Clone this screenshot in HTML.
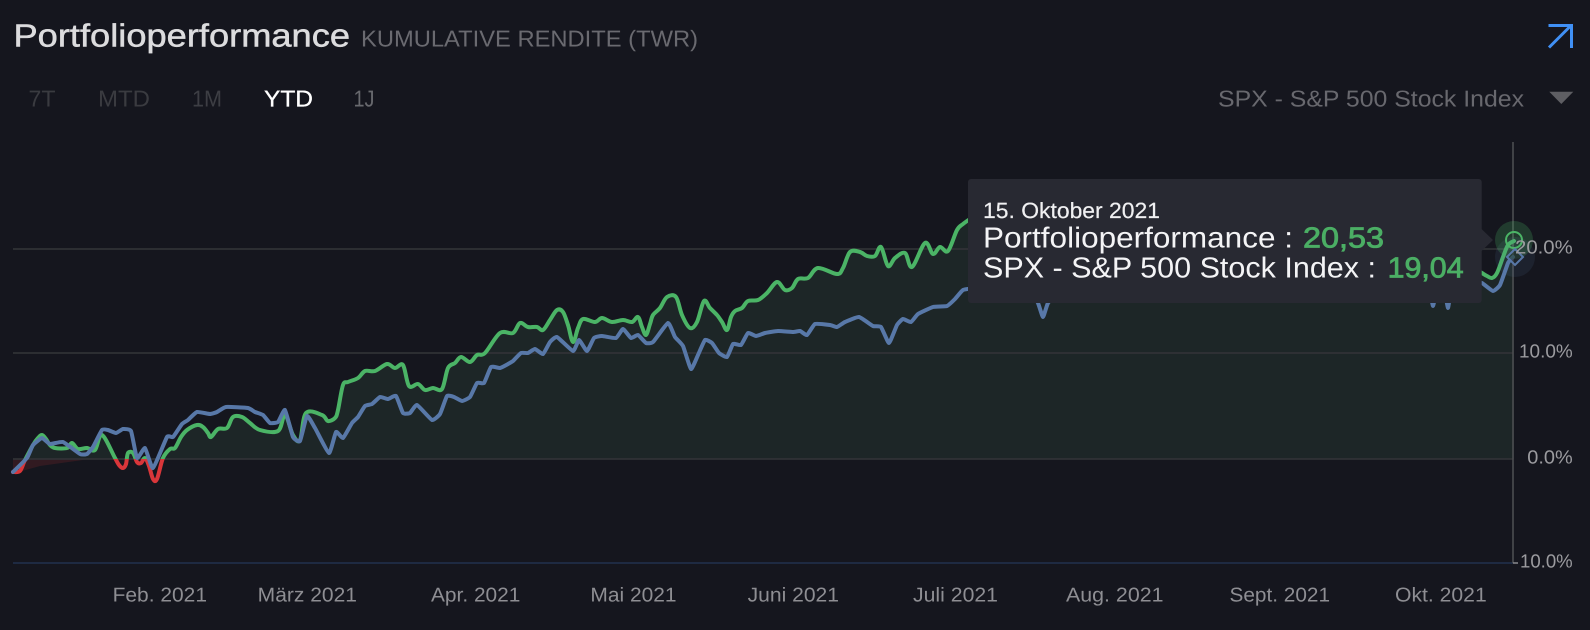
<!DOCTYPE html>
<html>
<head>
<meta charset="utf-8">
<style>
html,body{margin:0;padding:0;background:#15161e;width:1590px;height:630px;overflow:hidden}
svg{display:block}
text{font-family:"Liberation Sans",sans-serif;text-rendering:geometricPrecision}
</style>
</head>
<body>
<svg width="1590" height="630" viewBox="0 0 1590 630" xmlns="http://www.w3.org/2000/svg">
<defs>
<clipPath id="up"><rect x="0" y="0" width="1590" height="459"/></clipPath>
<clipPath id="down"><rect x="0" y="459" width="1590" height="171"/></clipPath>
</defs>
<rect width="1590" height="630" fill="#15161e"/>

<!-- header -->
<text x="13.5" y="46.7" font-size="32" fill="#dcdcde" stroke="#dcdcde" stroke-width="0.5" textLength="336.5" lengthAdjust="spacingAndGlyphs">Portfolioperformance</text>
<text x="361" y="46.7" font-size="23" fill="#6a6a70" textLength="337" lengthAdjust="spacingAndGlyphs">KUMULATIVE RENDITE (TWR)</text>
<path d="M1549 47.5L1570.5 26M1548.5 25.5H1571.5V48" fill="none" stroke="#4090f5" stroke-width="3"/>

<!-- tabs -->
<text x="28.5" y="106.7" font-size="23" fill="#3a3b40" textLength="27" lengthAdjust="spacingAndGlyphs">7T</text>
<text x="98" y="106.7" font-size="23" fill="#3a3b40" textLength="52" lengthAdjust="spacingAndGlyphs">MTD</text>
<text x="192" y="106.7" font-size="23" fill="#3d3e44" textLength="30" lengthAdjust="spacingAndGlyphs">1M</text>
<text x="264" y="106.7" font-size="23" fill="#ffffff" stroke="#ffffff" stroke-width="0.3" textLength="49" lengthAdjust="spacingAndGlyphs">YTD</text>
<text x="353.5" y="106.7" font-size="23" fill="#68696e" textLength="21" lengthAdjust="spacingAndGlyphs">1J</text>
<text x="1218" y="106.7" font-size="23" fill="#68686e" textLength="306" lengthAdjust="spacingAndGlyphs">SPX - S&amp;P 500 Stock Index</text>
<path d="M1549.3 91.7H1573.3L1561.3 104Z" fill="#5e5e63"/>

<!-- area -->
<polygon clip-path="url(#up)" fill="#1d2627" points="13,459 13,472 20,471 25,460 33,445 38,438 42,435 46,439 50,445 55,448 67,448 72,443 78,449 87,448 95,450 102,435 115,458 119,465 123,468 126,464 128,453 133,453 137,462 141,463 145,458 149,466 153,479 157,479 163,458 170,449 175,448 181,437 187,430 197,425 203,427 208,433 211,437 218,429 227,428 233,417 242,417 250,423 260,430 278,431 285,415 293,435 300,440 306,413 322,415 328,421 335,418 338,410 343,385 348,382 358,378 365,371 375,371 387,364 395,368 403,365 409,386 418,384 425,390 433,388 442,389 448,368 455,363 461,357 470,362 477,355 485,353 500,333 513,333 520,323 528,327 537,327 543,330 550,320 557,310 563,312 568,325 573,342 578,328 583,319 595,322 602,318 612,322 623,320 632,322 638,317 642,327 646,335 650,324 653,315 660,308 667,297 676,297 682,315 690,328 697,322 704,301 710,308 717,315 722,322 727,330 731,317 735,311 742,308 748,301 758,300 767,293 777,282 785,290 792,288 798,279 808,278 818,268 837,274 843,268 850,252 860,252 867,256 875,256 881,247 888,266 895,258 905,253 912,267 925,243 933,254 940,247 948,251 957,230 967,220 1000,210 1470,240 1476,268 1482,273 1492,278 1497,273 1503,257 1508,245 1514,241 1514,459"/>
<polygon fill="#d9363a" fill-opacity="0.14" points="13,459 13,472 22,471 40,466 90,459"/>

<!-- grid -->
<g stroke="#303236" stroke-width="1.8">
<line x1="13" y1="249" x2="1513" y2="249"/>
<line x1="13" y1="353" x2="1513" y2="353"/>
<line x1="13" y1="459" x2="1513" y2="459"/>
</g>
<line x1="13" y1="563" x2="1513" y2="563" stroke="#1f2d47" stroke-width="1.8"/>
<line x1="1513" y1="142" x2="1513" y2="563" stroke="#4c4d51" stroke-width="1.6"/>
<line x1="1513" y1="563" x2="1518" y2="563" stroke="#8a8a8e" stroke-width="1.5"/>

<!-- green line -->
<polyline class="sm" data-k="6" clip-path="url(#up)" fill="none" stroke="#4bb466" stroke-width="4" stroke-linejoin="round" stroke-linecap="round" points="13,472 20,471 25,460 33,445 38,438 42,435 46,439 50,445 55,448 67,448 72,443 78,449 87,448 95,450 102,435 115,458 119,465 123,468 126,464 128,453 133,453 137,462 141,463 145,458 149,466 153,479 157,479 163,458 170,449 175,448 181,437 187,430 197,425 203,427 208,433 211,437 218,429 227,428 233,417 242,417 250,423 260,430 278,431 285,415 293,435 300,440 306,413 322,415 328,421 335,418 338,410 343,385 348,382 358,378 365,371 375,371 387,364 395,368 403,365 409,386 418,384 425,390 433,388 442,389 448,368 455,363 461,357 470,362 477,355 485,353 500,333 513,333 520,323 528,327 537,327 543,330 550,320 557,310 563,312 568,325 573,342 578,328 583,319 595,322 602,318 612,322 623,320 632,322 638,317 642,327 646,335 650,324 653,315 660,308 667,297 676,297 682,315 690,328 697,322 704,301 710,308 717,315 722,322 727,330 731,317 735,311 742,308 748,301 758,300 767,293 777,282 785,290 792,288 798,279 808,278 818,268 837,274 843,268 850,252 860,252 867,256 875,256 881,247 888,266 895,258 905,253 912,267 925,243 933,254 940,247 948,251 957,230 963,224 970,219 977,215 985,225 1000,240 1100,260 1440,260 1462,262 1472,266 1477,270 1482,273 1487,276 1492,278 1497,273 1503,257 1508,245 1514,241"/>
<polyline class="sm" data-k="6" clip-path="url(#down)" fill="none" stroke="#d9363a" stroke-width="4" stroke-linejoin="round" stroke-linecap="round" points="13,472 20,471 25,460 33,445 87,448 95,450 102,435 115,458 119,465 123,468 126,464 128,453 133,453 137,462 141,463 145,458 149,466 153,479 157,479 163,458 170,449"/>

<!-- blue line -->
<polyline class="sm" data-k="14" fill="none" stroke="#5878a8" stroke-width="4" stroke-linejoin="round" stroke-linecap="round" points="13,472 27,458 33,445 42,438 50,444 63,442 80,454 87,454 93,447 102,430 108,430 116,433 123,429 131,431 137,458 145,448 153,468 167,437 173,437 182,424 188,420 197,412 210,414 217,412 226,407 248,408 255,412 263,415 270,423 278,422 285,410 293,437 300,441 307,416 315,428 329,453 336,432 343,438 352,423 358,417 365,406 372,404 380,397 388,399 396,396 403,413 410,413 417,405 432,420 440,414 447,396 454,397 462,401 470,397 477,383 484,383 491,367 500,368 508,364 513,361 521,353 528,353 535,349 543,354 550,342 557,337 573,351 579,340 587,351 594,338 602,336 616,338 623,329 631,338 638,335 646,343 653,342 668,323 675,337 683,346 691,369 698,355 705,340 712,343 719,353 727,357 733,344 741,345 748,333 756,336 765,333 778,331 793,332 800,331 807,335 815,324 830,325 837,327 845,322 859,317 873,326 881,327 889,343 897,325 903,319 911,322 918,314 933,307 947,306 955,299 963,290 975,288 990,285 1030,290 1038,303 1043,317 1048,303 1060,290 1075,290 1418,292 1430,295 1433,306 1436,295 1445,295 1448,308 1451,295 1470,280 1482,283 1493,291 1500,285 1508,263 1513,257"/>

<!-- markers -->
<circle cx="1515" cy="257" r="20" fill="#5878a8" fill-opacity="0.12"/>
<circle cx="1514" cy="240" r="19" fill="#4bb466" fill-opacity="0.24"/>
<circle cx="1514" cy="240" r="8" fill="none" stroke="#4bb466" stroke-width="2"/>
<path d="M1515 249L1523 257L1515 265L1507 257Z" fill="#1d2627" fill-opacity="0.5" stroke="#5878a8" stroke-width="2"/>

<!-- tooltip -->
<rect x="968" y="179" width="513.7" height="124" rx="3" fill="#282932"/>
<path d="M1481.5 229L1493 240L1481.5 251Z" fill="#282932"/>
<text x="983" y="218" font-size="22" fill="#f0f0f2" stroke="#f0f0f2" stroke-width="0.2" textLength="177" lengthAdjust="spacingAndGlyphs">15. Oktober 2021</text>
<text x="983" y="247.3" font-size="29" fill="#f4f4f6" textLength="310" lengthAdjust="spacingAndGlyphs">Portfolioperformance :</text>
<text x="1303" y="247.3" font-size="29" fill="#4bae64" stroke="#4bae64" stroke-width="0.8" textLength="81" lengthAdjust="spacingAndGlyphs">20,53</text>
<text x="983" y="277.3" font-size="29" fill="#f4f4f6" textLength="393" lengthAdjust="spacingAndGlyphs">SPX - S&amp;P 500 Stock Index :</text>
<text x="1387.6" y="277.3" font-size="29" fill="#4bae64" stroke="#4bae64" stroke-width="0.8" textLength="76" lengthAdjust="spacingAndGlyphs">19,04</text>

<!-- y axis labels -->
<g font-size="19" fill="#9b9b9f">
<text x="1515" y="253.3" textLength="57.7" lengthAdjust="spacingAndGlyphs">20.0%</text>
<text x="1519" y="357.5" textLength="53.7" lengthAdjust="spacingAndGlyphs">10.0%</text>
<text x="1527.3" y="463.3" textLength="45.4" lengthAdjust="spacingAndGlyphs">0.0%</text>
<text x="1520" y="567.3" textLength="52.7" lengthAdjust="spacingAndGlyphs">10.0%</text>
</g>

<!-- x axis labels -->
<g font-size="20" fill="#8e8e93">
<text x="112.6" y="601.7" textLength="94.4" lengthAdjust="spacingAndGlyphs">Feb. 2021</text>
<text x="257.7" y="601.7" textLength="99.3" lengthAdjust="spacingAndGlyphs">März 2021</text>
<text x="431" y="601.7" textLength="89.4" lengthAdjust="spacingAndGlyphs">Apr. 2021</text>
<text x="590.4" y="601.7" textLength="86.2" lengthAdjust="spacingAndGlyphs">Mai 2021</text>
<text x="747.6" y="601.7" textLength="91.4" lengthAdjust="spacingAndGlyphs">Juni 2021</text>
<text x="913" y="601.7" textLength="85" lengthAdjust="spacingAndGlyphs">Juli 2021</text>
<text x="1066" y="601.7" textLength="97.5" lengthAdjust="spacingAndGlyphs">Aug. 2021</text>
<text x="1229.5" y="601.7" textLength="100.5" lengthAdjust="spacingAndGlyphs">Sept. 2021</text>
<text x="1395" y="601.7" textLength="91.7" lengthAdjust="spacingAndGlyphs">Okt. 2021</text>
</g>
</svg>
<script>
document.querySelectorAll('polyline.sm').forEach(function(el){
  var k=+el.getAttribute('data-k'),p=el.getAttribute('points').trim().split(/\s+/).map(function(s){return s.split(',').map(Number)}),d='M'+p[0];
  for(var i=0;i<p.length-1;i++){
    var a=p[Math.max(i-1,0)],b=p[i],c=p[i+1],e=p[Math.min(i+2,p.length-1)];
    d+='C'+[(b[0]+(c[0]-a[0])/k).toFixed(1),(b[1]+(c[1]-a[1])/k).toFixed(1),(c[0]-(e[0]-b[0])/k).toFixed(1),(c[1]-(e[1]-b[1])/k).toFixed(1),c[0],c[1]].join(' ');
  }
  var n=document.createElementNS('http://www.w3.org/2000/svg','path');
  ['clip-path','fill','stroke','stroke-width','stroke-linejoin','stroke-linecap'].forEach(function(t){var v=el.getAttribute(t);if(v)n.setAttribute(t,v)});
  n.setAttribute('d',d);
  el.parentNode.replaceChild(n,el);
});
</script>
</body>
</html>
